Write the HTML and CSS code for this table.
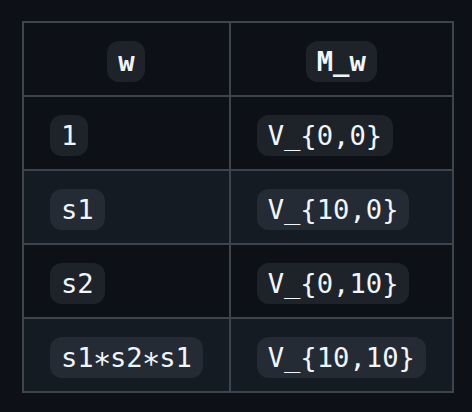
FILE: index.html
```html
<!DOCTYPE html>
<html>
<head>
<meta charset="utf-8">
<link rel="stylesheet" href="styles.css">
</head>
<body>
<div class="page">
<table class="tbl">
<thead>
<tr><th><code>w</code></th><th><code>M_w</code></th></tr>
</thead>
<tbody>
<tr><td><code>1</code></td><td><code>V_{0,0}</code></td></tr>
<tr><td><code>s1</code></td><td><code>V_{10,0}</code></td></tr>
<tr><td><code>s2</code></td><td><code>V_{0,10}</code></td></tr>
<tr><td><code>s1<span class="ast">*</span>s2<span class="ast">*</span>s1</code></td><td><code>V_{10,10}</code></td></tr>
</tbody>
</table>
</div>
</body>
</html>
```
FILE: styles.css
```css
html, body {
  margin: 0;
  padding: 0;
  background: #0d1117;
}
.page {
  padding: 21px 22px;
  font-family: "Noto Sans", "Liberation Sans", sans-serif;
  font-size: 32px;
  line-height: 1.5;
  color: #f0f6fc;
}
.tbl {
  border-collapse: collapse;
  border-spacing: 0;
}
.tbl th, .tbl td {
  border: 2px solid #3d444d;
  padding: 12px 26px;
}
.tbl th {
  font-weight: 600;
  text-align: center;
}
.tbl td {
  text-align: left;
}
.tbl tbody tr:nth-child(2n) {
  background: #151b23;
}
.tbl code {
  font-family: "DejaVu Sans Mono", monospace;
  font-size: 85%;
  padding: 0.2em 0.4em;
  background: rgba(101, 108, 118, 0.2);
  border-radius: 12px;
  white-space: nowrap;
}
.ast {
  display: inline-block;
  line-height: 1;
  transform: translateY(0.22em) scale(1.12);
}
```
